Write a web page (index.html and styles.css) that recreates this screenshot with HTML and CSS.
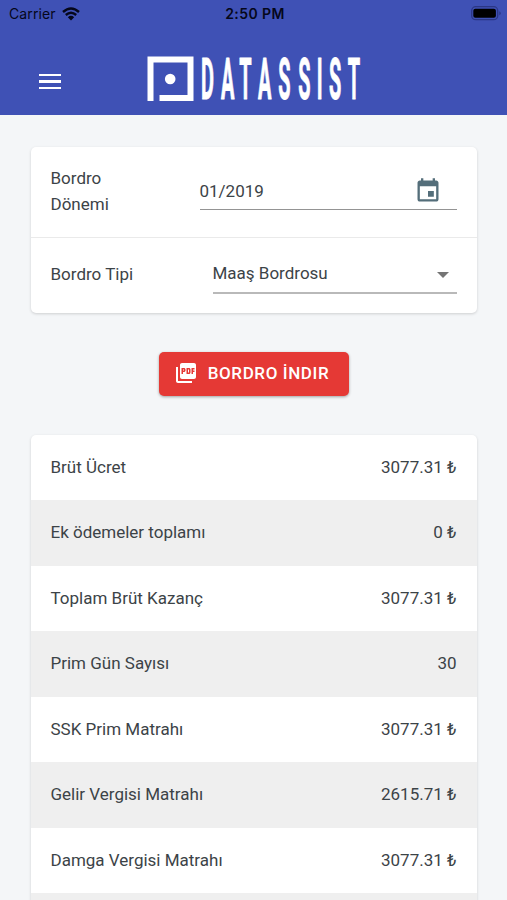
FILE: index.html
```html
<!DOCTYPE html>
<html lang="tr">
<head>
  <meta charset="UTF-8">
  <meta name="viewport" content="width=device-width, initial-scale=1.0">
  <title>Bordro</title>
  <link rel="stylesheet" href="styles.css">
</head>
<body>

<header class="header">
  <div class="status">
    <div class="carrier">
      <span>Carrier</span>
      <svg class="wifi" width="18" height="14" viewBox="0 0 18 14">
        <path d="M1 5Q9-2 17 5M3.8 8Q9 3.4 14.2 8" fill="none" stroke="#05071a" stroke-width="2.4"/>
        <path d="M5.8 10.2Q9 7.4 12.2 10.2L9 13.5z" fill="#05071a"/>
      </svg>
    </div>
    <div class="time">2:50 PM</div>
    <div class="battery">
      <svg width="30" height="15" viewBox="0 0 30 15">
        <rect x=".7" y=".7" width="26" height="13" rx="4" fill="none" stroke="#2b3785" stroke-width="1.3"/>
        <rect x="2.3" y="2.8" width="22.6" height="9" rx="2" fill="#000"/>
        <path d="M28.3 5.2v4q1.4-.6 1.4-2t-1.4-2z" fill="#2b3785"/>
      </svg>
    </div>
  </div>
  <div class="toolbar">
    <div class="menu"><i></i><i></i><i></i></div>
    <svg class="logo" width="230" height="60" viewBox="0 0 230 60">
      <path d="M3.500 46V4.500H43.500V43H12.500" fill="none" stroke="#fff" stroke-width="6"/>
      <circle cx="23.200" cy="24" r="5.300" fill="#fff"/>
      <g transform="translate(54 44) scale(.35 1)">
        <text class="brand" x="0 57 109 163 221 278 331 366 419">DATASSIST</text>
      </g>
    </svg>
  </div>
</header>

<main class="content">
  <section class="card form">
    <div class="field period">
      <label>Bordro Dönemi</label>
      <div class="control">
        <span>01/2019</span>
        <svg class="calendar" width="28" height="28" viewBox="0 0 24 24">
          <path fill="#546e7a" d="M17 12h-5v5h5v-5zM16 1v2H8V1H6v2H5c-1.110 0-1.990.9-1.990 2L3 19c0 1.100.89 2 2 2h14c1.100 0 2-.9 2-2V5c0-1.100-.9-2-2-2h-1V1h-2zm3 18H5V8h14v11z"/>
        </svg>
      </div>
    </div>
    <div class="field type">
      <label>Bordro Tipi</label>
      <div class="control">
        <span>Maaş Bordrosu</span>
        <i class="arrow"></i>
      </div>
    </div>
  </section>

  <button class="download">
    <svg width="24" height="24" viewBox="0 0 24 24">
      <path fill="#fff" d="M20 2H8c-1.100 0-2 .9-2 2v12c0 1.100.9 2 2 2h12c1.100 0 2-.9 2-2V4c0-1.100-.9-2-2-2zm-8.500 7.500c0 .83-.67 1.500-1.500 1.500H9v2H7.500V7H10c.83 0 1.500.67 1.500 1.500v1zm5 2c0 .83-.67 1.500-1.500 1.500h-2.500V7H15c.83 0 1.500.67 1.500 1.500v3zm4-3H19v1h1.500V11H19v2h-1.500V7h3v1.500zM9 9.500h1v-1H9v1zM4 6H2v14c0 1.100.9 2 2 2h14v-2H4V6zm10 5.500h1v-3h-1v3z"/>
    </svg>
    <span>BORDRO İNDIR</span>
  </button>

  <section class="card list">
    <div class="row"><span>Brüt Ücret</span><span>3077.31 ₺</span></div>
    <div class="row"><span>Ek ödemeler toplamı</span><span>0 ₺</span></div>
    <div class="row"><span>Toplam Brüt Kazanç</span><span>3077.31 ₺</span></div>
    <div class="row"><span>Prim Gün Sayısı</span><span>30</span></div>
    <div class="row"><span>SSK Prim Matrahı</span><span>3077.31 ₺</span></div>
    <div class="row"><span>Gelir Vergisi Matrahı</span><span>2615.71 ₺</span></div>
    <div class="row"><span>Damga Vergisi Matrahı</span><span>3077.31 ₺</span></div>
    <div class="row"></div>
  </section>
</main>

</body>
</html>
```
FILE: styles.css
```css
* {
  box-sizing: border-box;
}
body {
  margin: 0;
  height: 900px;
  overflow: hidden;
  background-color: #f4f6f8;
  color: #3c4347;
  font-family: Roboto, "Liberation Sans", sans-serif;
  font-size: 17px;
}

/* header */
.header {
  height: 115px;
  background-color: #3f51b5;
}
.status {
  display: grid;
  grid-template-columns: 1fr auto 1fr;
  align-items: center;
  height: 27px;
  padding: 0 6px 0 9px;
  color: #05071a;
  font-family: Inter, sans-serif;
  font-size: 14px;
}
.carrier {
  display: flex;
  align-items: center;
  gap: 6px;
  letter-spacing: 0.1px;
}
.time {
  font-weight: 600;
  letter-spacing: 0.4px;
}
.battery {
  display: flex;
  justify-content: flex-end;
}
.toolbar {
  display: flex;
  padding: 28px 0 0 39px;
}
.menu {
  display: flex;
  flex-direction: column;
  gap: 4px;
  width: 22px;
  margin-top: 19px;
  margin-right: 86px;
}
.menu i {
  height: 2.400px;
  background-color: #fff;
}
.logo {
  overflow: visible;
}
.brand {
  fill: #fff;
  stroke: #fff;
  stroke-width: 1px;
  stroke-linejoin: round;
  font-family: Roboto, sans-serif;
  font-size: 57px;
  font-weight: 700;
}

/* cards */
.content {
  display: flex;
  flex-direction: column;
  align-items: center;
  padding: 31.500px 31px 0;
}
.card {
  width: 446px;
  border-radius: 5px;
  background-color: #fff;
  box-shadow: 0 1px 3px rgba(0, 0, 0, 0.16);
  overflow: hidden;
}
.field {
  display: flex;
  justify-content: space-between;
  padding: 0 20px;
}
.period {
  height: 91px;
  border-bottom: 1px solid #eaeaea;
}
.period label {
  width: 90px;
  padding-top: 18px;
  line-height: 26px;
}
.type {
  height: 75px;
}
.type label {
  padding-top: 26px;
}
.control {
  display: flex;
  align-items: center;
  justify-content: space-between;
  border-bottom: 1px solid #949494;
}
.period .control {
  width: 257px;
  height: 38px;
  margin-top: 25px;
  padding: 2px 15px 0 0;
}
.type .control {
  width: 244px;
  height: 39px;
  margin-top: 17px;
  padding-right: 8px;
  border-bottom: 2px solid #b9b9b9;
}
.arrow {
  margin-top: 4px;
  border: 6px solid transparent;
  border-top-color: #757575;
  border-bottom: 0;
}

/* download button */
.download {
  display: flex;
  align-items: center;
  justify-content: center;
  gap: 10px;
  width: 190px;
  height: 44px;
  margin: 39.500px 0 39px;
  padding: 0 4px 2px 0;
  border: none;
  border-radius: 5px;
  background-color: #e53935;
  box-shadow: 0 1px 3px rgba(0, 0, 0, 0.35);
  color: #fff;
  font-family: inherit;
  font-size: 17px;
  font-weight: 500;
  letter-spacing: 0.6px;
}

/* payroll rows */
.row {
  display: flex;
  align-items: center;
  justify-content: space-between;
  height: 65.500px;
  padding: 0 20px 1px;
}
.row:first-child {
  height: 65px;
}
.row:nth-child(even) {
  background-color: #efefef;
}
```
